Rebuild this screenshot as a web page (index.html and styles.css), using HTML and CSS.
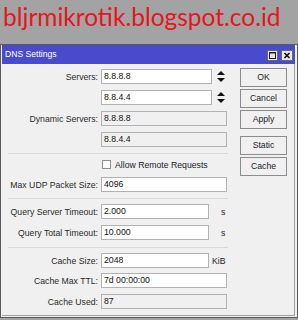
FILE: index.html
```html
<!DOCTYPE html>
<html>
<head>
<meta charset="utf-8">
<link rel="stylesheet" href="styles.css">
</head>
<body>
<div class="header">bljrmikrotik.blogspot.co.id</div>
<div class="window">
  <div class="titlebar">
    <span class="title">DNS Settings</span>
    <span class="tbtn">
      <svg width="11" height="11" viewBox="0 0 11 11"><rect x="0.5" y="0.5" width="10" height="10" fill="#e6e6e6" stroke="#6a6a6a"/><rect x="2.5" y="2.5" width="6" height="6" fill="none" stroke="#222"/><line x1="2" y1="3" x2="9" y2="3" stroke="#222" stroke-width="1"/></svg>
    </span>
    <span class="tbtn close">
      <svg width="12" height="11" viewBox="0 0 12 11"><rect x="0.5" y="0.5" width="11" height="10" fill="#e6e6e6" stroke="#6a6a6a"/><path d="M3.5 3 L8.5 8 M8.5 3 L3.5 8" stroke="#111" stroke-width="1.6"/></svg>
    </span>
  </div>
  <div class="body">
    <div class="form">
      <div class="row">
        <label class="lbl">Servers:</label>
        <div class="field"><span class="inp w111">8.8.8.8</span><span class="spin"><svg width="8" height="11" viewBox="0 0 8 11"><path d="M4 0 L8 4 L0 4 Z M0 7 L8 7 L4 11 Z" fill="#111"/></svg></span></div>
      </div>
      <div class="row">
        <span class="lbl"></span>
        <div class="field"><span class="inp w111">8.8.4.4</span><span class="spin"><svg width="8" height="11" viewBox="0 0 8 11"><path d="M4 0 L8 4 L0 4 Z M0 7 L8 7 L4 11 Z" fill="#111"/></svg></span></div>
      </div>
      <div class="row">
        <label class="lbl">Dynamic Servers:</label>
        <div class="field"><span class="inp ro w126">8.8.8.8</span></div>
      </div>
      <div class="row">
        <span class="lbl"></span>
        <div class="field"><span class="inp ro w126">8.8.4.4</span></div>
      </div>
      <div class="sep s1"></div>
      <div class="row chkrow">
        <span class="lbl"></span>
        <div class="field"><span class="chk"></span><span class="chktext">Allow Remote Requests</span></div>
      </div>
      <div class="row r-udp">
        <label class="lbl">Max UDP Packet Size:</label>
        <div class="field"><span class="inp w126">4096</span></div>
      </div>
      <div class="sep s2"></div>
      <div class="row r-qs">
        <label class="lbl">Query Server Timeout:</label>
        <div class="field"><span class="inp w108">2.000</span><span class="unit u-s">s</span></div>
      </div>
      <div class="row">
        <label class="lbl">Query Total Timeout:</label>
        <div class="field"><span class="inp w108">10.000</span><span class="unit u-s">s</span></div>
      </div>
      <div class="sep s3"></div>
      <div class="row r-cs">
        <label class="lbl">Cache Size:</label>
        <div class="field"><span class="inp w108">2048</span><span class="unit u-kib">KiB</span></div>
      </div>
      <div class="row r-ttl">
        <label class="lbl">Cache Max TTL:</label>
        <div class="field"><span class="inp w126">7d 00:00:00</span></div>
      </div>
      <div class="row">
        <label class="lbl">Cache Used:</label>
        <div class="field"><span class="inp ro w126">87</span></div>
      </div>
    </div>
    <div class="buttons">
      <div class="btn">OK</div>
      <div class="btn">Cancel</div>
      <div class="btn">Apply</div>
      <div class="btn gap">Static</div>
      <div class="btn">Cache</div>
    </div>
  </div>
</div>
</body>
</html>
```
FILE: styles.css
```css
html, body {
  margin: 0;
  padding: 0;
}
body {
  width: 298px;
  height: 320px;
  overflow: hidden;
  background: #a3a3a3;
  font-family: "Liberation Sans", Arial, sans-serif;
}
.header {
  height: 44px;
  box-sizing: border-box;
  padding-left: 3px;
  font-family: Lato, "Open Sans", sans-serif;
  font-size: 24.5px;
  line-height: 33px;
  color: #e5161e;
  white-space: nowrap;
}
.window {
  height: 274px;
  box-sizing: border-box;
  border: 1px solid #5a5a5a;
  background: #f0f0f0;
  padding: 0 2px 2px 1px;
  display: flex;
  flex-direction: column;
}
.titlebar {
  height: 19px;
  background: #4a4acc;
  display: flex;
  align-items: center;
  padding-left: 3px;
  padding-right: 2px;
}
.title {
  flex: 1;
  color: #fff;
  font-size: 8.6px;
  line-height: 19px;
}
.tbtn {
  display: flex;
  margin-top: 1px;
}
.tbtn.close {
  margin-left: 3px;
}
.body {
  flex: 1;
  display: flex;
  align-items: flex-start;
  border-right: 1px solid #a0a0a0;
  border-bottom: 1px solid #a0a0a0;
  padding-top: 5px;
}
.form {
  width: 226px;
  display: flex;
  flex-direction: column;
}
.row {
  display: grid;
  grid-template-columns: 96px auto;
  column-gap: 3px;
  align-items: center;
  height: 15px;
  margin-bottom: 6px;
}
.lbl {
  text-align: right;
  font-size: 8.7px;
  color: #2a2a2a;
  white-space: nowrap;
}
.field {
  display: flex;
  align-items: center;
}
.inp {
  box-sizing: border-box;
  height: 15px;
  border: 1px solid #b2b2b2;
  background: #fff;
  padding-left: 2px;
  font-size: 8.7px;
  line-height: 13px;
  color: #111;
  white-space: nowrap;
}
.inp.ro {
  background: #f0f0f0;
}
.w111 { width: 111px; }
.w126 { width: 126px; }
.w108 { width: 108px; }
.spin {
  display: flex;
  margin-left: 5px;
}
.unit {
  font-size: 8.7px;
  color: #1a1a2a;
}
.u-s { margin-left: 12px; }
.u-kib { margin-left: 3px; }
.sep {
  height: 1px;
  width: 220px;
  margin-left: 6px;
  background: #d9d9d9;
}
.s1 { margin-top: 0; margin-bottom: 3px; }
.chkrow { margin-bottom: 5px; }
.chk {
  box-sizing: border-box;
  width: 9px;
  height: 9px;
  margin-left: 1px;
  border: 1px solid #8f8f8f;
  background: #fff;
}
.chktext {
  margin-left: 4px;
  font-size: 8.7px;
  color: #1a1a2a;
}
.r-udp { margin-bottom: 6px; }
.s2 { margin-bottom: 5px; }
.s3 { margin-top: 1px; margin-bottom: 5px; }
.r-cs { margin-bottom: 5px; }
.buttons {
  margin-left: 12px;
  margin-top: -1px;
  width: 47px;
  display: flex;
  flex-direction: column;
}
.btn {
  box-sizing: border-box;
  height: 19px;
  margin-bottom: 2px;
  border: 1px solid #8c8c8c;
  background: #f0f0f0;
  font-size: 8.7px;
  line-height: 17px;
  text-align: center;
  color: #1a1a2a;
}
.btn.gap {
  margin-top: 5px;
}
```
